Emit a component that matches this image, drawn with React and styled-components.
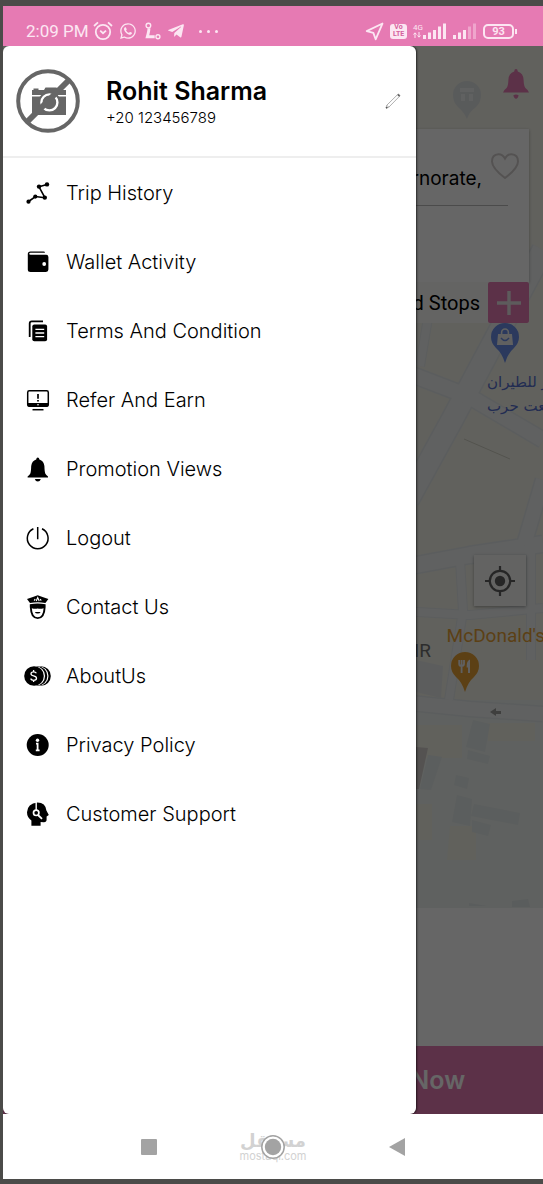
import React from 'react'
import styled, { createGlobalStyle } from 'styled-components'
import { FaWhatsapp, FaTelegramPlane } from 'react-icons/fa'

const GlobalStyle = createGlobalStyle`
*{
    box-sizing:border-box;
}
body{
    margin:0;
    background-color:#4b4b49;
    font-family:Inter, "Noto Sans", sans-serif;
}
`

const TripIcon = () => (
    <svg viewBox="0 0 28 28">
        <path d="M5.5 22.5 12.5 17.5 22 18.8 16 7.8 24 5.5" fill="none" stroke="#000" strokeWidth="1.6" />
        <circle cx="5.5" cy="22.7" r="2.1" />
        <circle cx="12.3" cy="17.6" r="2.1" />
        <circle cx="21.8" cy="18.6" r="2.2" />
        <circle cx="16" cy="7.6" r="2.2" />
        <circle cx="24" cy="5.4" r="2.2" />
    </svg>
)

const WalletIcon = () => (
    <svg viewBox="0 0 28 28">
        <path d="M7.5 3.5H20.5Q22 3.5 22 4.8H7.5Q6.2 4.9 6.2 5.8T7.5 6.8H23Q25.4 6.8 25.4 9V21.6Q25.4 24 23 24H7.5Q4.8 24 4.8 21.5V6Q4.8 3.5 7.5 3.5Z" />
        <circle cx="21.2" cy="16" r="1.9" fill="#fff" />
    </svg>
)

const TermsIcon = () => (
    <svg viewBox="0 0 28 28">
        <path d="M6.7 20V6.5Q6.7 4.4 8.8 4.4H20" fill="none" stroke="#000" strokeWidth="1.8" />
        <rect x="9.3" y="7.6" width="14.8" height="16.6" rx="2" />
        <path d="M12.4 12.4H21.2M12.4 16H21.2M12.4 19.6H21.2" stroke="#fff" strokeWidth="1.4" />
    </svg>
)

const ReferIcon = () => (
    <svg viewBox="0 0 28 28">
        <rect x="4.7" y="4.8" width="20.6" height="15.4" rx="1.6" fill="none" stroke="#000" strokeWidth="1.5" />
        <path d="M4.5 17H25.5V19.5Q25.5 20.8 24 20.8H6Q4.5 20.8 4.5 19.5Z" />
        <path d="M15 8V12.8M15 14V15.6" stroke="#000" strokeWidth="1.7" />
        <circle cx="15" cy="18.8" r="0.8" fill="#fff" />
        <path d="M9.5 23.7H20.5" stroke="#000" strokeWidth="1.5" />
    </svg>
)

const BellIcon = () => (
    <svg viewBox="0 0 28 28">
        <path d="M14.8 2.6Q16.2 2.6 16.4 4.4Q20.8 5.8 21.4 11Q21.6 17.6 22.4 18.8Q23 20 25 21.4V22.4H4.6V21.4Q6.6 20 7.2 18.8Q8 17.6 8.2 11Q8.8 5.8 13.2 4.4Q13.4 2.6 14.8 2.6Z" />
        <path d="M11.8 24H17.8Q17 26.6 14.8 26.6T11.8 24Z" />
    </svg>
)

const PowerIcon = () => (
    <svg viewBox="0 0 28 28" fill="none" stroke="#000" strokeWidth="1.5">
        <path d="M10.4 4.8A10.4 10.4 0 1 0 19 4.8M14.7 3V15.2" />
    </svg>
)

const OfficerIcon = () => (
    <svg viewBox="0 0 28 28">
        <path d="M14.7 2.2Q19 4 25.4 6L22.4 10Q14.7 8.4 7 10L4 6Q10.4 4 14.7 2.2Z" />
        <path d="M6.8 11.2Q14.7 9.6 22.6 11.2V14Q22.2 26 14.7 26T6.8 14Z" />
        <path d="M8.8 15.2Q12 16.2 14.7 15.4Q17.4 16.2 20.6 15.2Q20 24.2 14.7 24.2T8.8 15.2Z" fill="#fff" />
        <path d="M11.8 19H17.6Q17 20.6 14.7 20.6T11.8 19Z" />
        <path d="M13.2 8 14.7 4.6 16.2 8M11.2 7.6 12.2 6M18.2 7.6 17.2 6" fill="none" stroke="#fff" strokeWidth="1.1" />
    </svg>
)

const CoinsIcon = () => (
    <svg viewBox="0 0 28 28">
        <circle cx="18" cy="14" r="9.8" />
        <circle cx="15.7" cy="14" r="9.8" fill="#fff" />
        <circle cx="14.5" cy="14" r="9.8" />
        <circle cx="12.3" cy="14" r="9.8" fill="#fff" />
        <circle cx="11" cy="14" r="9.8" />
        <path d="M13.4 11.2Q12.6 9.8 10.6 9.8Q8 9.8 8 11.8Q8 13.4 10.6 13.9Q13.5 14.5 13.5 16.3Q13.5 18.3 10.7 18.3Q8.4 18.3 7.6 16.6M10.6 8V9.8M10.6 18.3V20" fill="none" stroke="#fff" strokeWidth="1.3" />
    </svg>
)

const InfoIcon = () => (
    <svg viewBox="0 0 28 28">
        <circle cx="14.7" cy="14" r="11" />
        <circle cx="14.5" cy="9.2" r="1.7" fill="#fff" />
        <path d="M13 12.7H14.6V19.4M12.8 19.4H16.6" stroke="#fff" strokeWidth="1.8" fill="none" />
    </svg>
)

const SupportIcon = () => (
    <svg viewBox="0 0 28 28">
        <path d="M14.4 2.4Q22.6 2.6 23.4 10.4L25.8 15 23.6 16.4V19.6Q23.6 22.4 20.6 22.2L17.6 22V25.8H8.4V20.4Q4 17.4 4 12.2Q4.4 3.4 14.4 2.4Z" />
        <path d="M13.2 2V10" stroke="#fff" strokeWidth="1.4" />
        <circle cx="13.2" cy="12.8" r="2.7" fill="none" stroke="#fff" strokeWidth="1.7" />
        <path d="M15 15 19 18.8" stroke="#fff" strokeWidth="1.8" />
    </svg>
)

const menuItems = [
    { label: 'Trip History', Icon: TripIcon },
    { label: 'Wallet Activity', Icon: WalletIcon },
    { label: 'Terms And Condition', Icon: TermsIcon },
    { label: 'Refer And Earn', Icon: ReferIcon },
    { label: 'Promotion Views', Icon: BellIcon },
    { label: 'Logout', Icon: PowerIcon },
    { label: 'Contact Us', Icon: OfficerIcon },
    { label: 'AboutUs', Icon: CoinsIcon },
    { label: 'Privacy Policy', Icon: InfoIcon },
    { label: 'Customer Support', Icon: SupportIcon },
]

const AvatarIcon = () => (
    <svg viewBox="0 0 64 64" width="64" height="64">
        <path d="M17.5 19.5H22.5V21H28L29.5 18.5H40.5L42 21H50V26H16V21H17.5ZM16 27.6H50V46H16Z" fill="#666" />
        <circle cx="33.4" cy="33.4" r="11" fill="#666" />
        <circle cx="33.4" cy="33.4" r="8" fill="none" stroke="#fff" strokeWidth="2.4" />
        <path d="M11 53 53 11" stroke="#666" strokeWidth="6" />
        <circle cx="32" cy="32" r="29.8" fill="none" stroke="#666" strokeWidth="4" />
    </svg>
)

const AlarmIcon = () => (
    <svg viewBox="0 0 20 20" width="20" height="20" fill="none" stroke="currentColor" strokeWidth="1.8">
        <circle cx="10" cy="11" r="7.2" />
        <path d="M1 5 5 1.4M19 5 15 1.4M7.2 9.6 10 12.2 13 9.6" />
    </svg>
)

const RouteIcon = () => (
    <svg viewBox="0 0 20 20" width="18" height="20" fill="none" stroke="currentColor">
        <circle cx="6" cy="4" r="2.6" strokeWidth="1.5" />
        <path d="M6.6 7Q6.6 10 4.8 16.4H13" strokeWidth="3.2" />
        <circle cx="16.6" cy="16.4" r="2.2" strokeWidth="1.5" />
    </svg>
)

const SignalIcon = ({ faded }) => (
    <svg viewBox="0 0 24 16" width="24" height="16" fill="currentColor">
        <rect x="0" y="12" width="3" height="4" />
        <rect x="5" y="9.5" width="3" height="6.5" />
        <rect x="10" y="7" width="3" height="9" />
        <rect x="15" y="3.5" width="3" height="12.5" opacity={faded ? 0.4 : 1} />
        <rect x="20" y="0.5" width="3" height="15.5" opacity={faded ? 0.4 : 1} />
    </svg>
)

// streets and blocks behind the booking card
const MapDrawing = () => (
    <MapSvg viewBox="3 46 540 862" preserveAspectRatio="xMaxYMin slice">
        <rect x="3" y="46" width="540" height="862" fill="#f2f2e9" />
        <rect x="3" y="700" width="540" height="208" fill="#edf3ef" />
        <g fill="none" stroke="#e4e9ea" strokeLinejoin="round">
            <path d="M543 250 500 330 452 420 408 500" strokeWidth="24" />
            <path d="M400 370 470 397 543 440" strokeWidth="18" />
            <path d="M428 318 420 366" strokeWidth="10" />
            <path d="M400 568 470 555 543 544" strokeWidth="19" />
            <path d="M543 480 524 545" strokeWidth="17" />
            <path d="M400 611 470 615 543 608M460 560 463 611 449 700M531 552V660" strokeWidth="10" />
            <path d="M400 702 470 709 543 714" strokeWidth="17" />
        </g>
        <g fill="none" stroke="#f0f2f2" strokeLinejoin="round">
            <path d="M543 250 500 330 452 420 408 500" strokeWidth="21" />
            <path d="M400 370 470 397 543 440" strokeWidth="15" />
            <path d="M428 318 420 366" strokeWidth="8" />
            <path d="M400 568 470 555 543 544" strokeWidth="16" />
            <path d="M543 480 524 545" strokeWidth="14" />
            <path d="M400 611 470 615 543 608M460 560 463 611 449 700M531 552V660" strokeWidth="8" />
            <path d="M400 702 470 709 543 714" strokeWidth="14" />
        </g>
        <path d="M464 439 510 459" stroke="#cfcfc2" />
        <path d="M416 660 443 666 441 698 416 692Z" fill="#e6e9e9" />
        <path d="M416 725H462V758H416ZM488 723H535V741H488ZM450 826H476V860H447ZM416 804H432V840H416Z" fill="#f2f2e6" />
        <path d="M416 747 428 748 419 789H416Z" fill="#d2cdca" />
        <path d="M428 755 442 757 431 790 420 789ZM473 720 490 724 485 752 466 747ZM468 750 490 756 488 764 467 759ZM456 775 469 778 467 789 454 785ZM457 795 472 799 470 826 452 822ZM474 804 520 813 518 825 471 816ZM472 820 491 825 488 836 472 832Z" fill="#e4eaea" />
        <path d="M469 903 487 906H469ZM512 901 528 899 530 907H512Z" fill="#e2e8e8" />
        <path d="M490 712 496 708 496 711H501V714H496V716Z" fill="#9d9d9b" />
        <g>
            <path d="M467 119Q464 112 458 107Q453 102 453 95A14 14 0 0 1 481 95Q481 102 476 107Q469 112 467 119Z" fill="#dfe3e3" />
            <path d="M460 88H474V92H460ZM461 94H465V101H461ZM469 94H473V101H469Z" fill="#f0f2f2" />
        </g>
    </MapSvg>
)

const ShopPin = () => (
    <svg viewBox="0 0 28 40" width="28" height="40">
        <path d="M14 40Q11 30 5 25Q0 20 0 14A14 14 0 0 1 28 14Q28 20 23 25Q17 30 14 40Z" fill="#6b8fe8" />
        <path d="M7 11H21L22 22H6Z" fill="#f0f0f0" />
        <path d="M10.6 11V9.4A3.4 3.4 0 0 1 17.4 9.4V11" fill="none" stroke="#f0f0f0" strokeWidth="1.6" />
        <path d="M10 15Q14 20 18 15" fill="none" stroke="#6b8fe8" strokeWidth="1.4" />
    </svg>
)

const FoodPin = () => (
    <svg viewBox="0 0 28 40" width="28" height="40">
        <path d="M14 40Q11 30 5 25Q0 20 0 14A14 14 0 0 1 28 14Q28 20 23 25Q17 30 14 40Z" fill="#e6a136" />
        <path d="M8.2 8V12Q8.2 14 10.6 14T13 12V8M10.6 8V21" fill="none" stroke="#f0f0f0" strokeWidth="1.8" />
        <path d="M19 7.6V21H17V15.6H15.6Q15.4 8.6 19 7.6Z" fill="#f0f0f0" />
    </svg>
)

function StatusBar() {
    return (
        <Status>
            <StatusGroup>
                <Clock>2:09 PM</Clock>
                <AlarmIcon />
                <FaWhatsapp size={18} />
                <RouteIcon />
                <FaTelegramPlane size={18} />
                <Dots>
                    <i /><i /><i />
                </Dots>
            </StatusGroup>
            <StatusGroup>
                <svg viewBox="0 0 20 20" width="19" height="19" fill="none" stroke="currentColor" strokeWidth="1.9" strokeLinejoin="round">
                    <path d="M18.4 1.6 1.8 9.6 8.8 11.4 11.2 18.2Z" />
                </svg>
                <Volte>
                    <span>Vo</span>
                    <span>LTE</span>
                </Volte>
                <Network>
                    <small>4G</small>
                    <svg viewBox="0 0 8 6" width="8" height="6" fill="none" stroke="currentColor">
                        <path d="M2 6V1M0.5 2.5 2 0.8 3.5 2.5M6 0V5M4.5 3.5 6 5.2 7.5 3.5" />
                    </svg>
                </Network>
                <SignalIcon />
                <SignalIcon faded />
                <Battery>93</Battery>
            </StatusGroup>
        </Status>
    )
}

function BookingScreen() {
    return (
        <Screen>
            <MapArea>
                <MapDrawing />
                <TopBar>
                    <IconButton aria-label="Notifications">
                        <svg viewBox="0 0 26 30" width="26" height="30" fill="#e67ab3">
                            <path d="M13 0Q14.6 0 14.8 2.4Q20.4 4 20.6 11Q20.8 17 22.4 19Q25.6 21.4 26 23.6H0Q.4 21.4 3.6 19Q5.2 17 5.4 11Q5.6 4 11.2 2.4Q11.4 0 13 0Z" />
                            <path d="M10.4 26.2Q13 25 15.6 26.2Q15 29.6 13 29.8Q11 29.6 10.4 26.2Z" />
                        </svg>
                    </IconButton>
                </TopBar>
                <PlaceCard>
                    <PlaceRow>
                        <Place>Cairo Governorate,</Place>
                        <IconButton aria-label="Save place">
                            <svg viewBox="0 0 28 26" width="28" height="26" fill="none" stroke="#d2cecc" strokeWidth="2">
                                <path d="M14 25Q1 15 1 8.4Q1 1.6 7.4 1.2Q11.6 1 14 5.6Q16.4 1 20.6 1.2Q27 1.6 27 8.4Q27 15 14 25Z" />
                            </svg>
                        </IconButton>
                    </PlaceRow>
                    <Rule />
                </PlaceCard>
                <StopsRow>
                    <span>Add Stops</span>
                    <PlusButton aria-label="Add stop">
                        <svg viewBox="0 0 24 24" width="24" height="24" stroke="#e9e4e6" strokeWidth="3.4">
                            <path d="M12 0V24M0 12H24" />
                        </svg>
                    </PlusButton>
                </StopsRow>
                <Marker $right={24} $top={277}><ShopPin /></Marker>
                <Marker $right={-44} $top={324}>
                    <ArabicLabel lang="ar" dir="rtl">
                        <span>مصر للطيران</span>
                        <span>طلعت حرب</span>
                    </ArabicLabel>
                </Marker>
                <Marker $right={17} $top={509}>
                    <LocateButton aria-label="My location">
                        <svg viewBox="0 0 30 30" width="30" height="30" fill="none" stroke="#606060" strokeWidth="2.2">
                            <circle cx="15" cy="15" r="10.2" />
                            <circle cx="15" cy="15" r="5.2" fill="#606060" stroke="none" />
                            <path d="M15 0V5M15 25V30M0 15H5M25 15H30" />
                        </svg>
                    </LocateButton>
                </Marker>
                <Marker $right={-2} $top={578}><PoiLabel $color="#e6a136">McDonald's</PoiLabel></Marker>
                <Marker $right={112} $top={593}><PoiLabel $color="#707070">TAHRIR</PoiLabel></Marker>
                <Marker $right={64} $top={606}><FoodPin /></Marker>
            </MapArea>
            <Panel />
            <RideBar>
                <RideButton>Ride Later</RideButton>
                <RideButton>Ride Now</RideButton>
            </RideBar>
        </Screen>
    )
}

function SideMenu() {
    return (
        <Drawer>
            <Profile>
                <AvatarIcon />
                <Who>
                    <Name>Rohit Sharma</Name>
                    <Phone>+20 123456789</Phone>
                </Who>
                <IconButton aria-label="Edit profile">
                    <svg viewBox="0 0 16 16" width="16" height="16" fill="none" stroke="#9a9a9a" strokeWidth="0.8">
                        <path d="M1 15 1.8 12.2 12.8 1.4Q13.6 .8 14.4 1.6Q15.2 2.4 14.6 3.2L3.8 14.2ZM1.8 12.2 3.8 14.2" />
                        <path d="M12.8 1.4 14.6 3.2M1 15 2.4 14.4" stroke="#555" strokeWidth="1.4" />
                    </svg>
                </IconButton>
            </Profile>
            <Menu>
                {menuItems.map(({ label, Icon }) => (
                    <MenuItem href="#" key={label}>
                        <Icon />
                        {label}
                    </MenuItem>
                ))}
            </Menu>
        </Drawer>
    )
}

export default function App() {
    return (
        <>
            <GlobalStyle />
            <Shell>
                <StatusBar />
                <Stage>
                    <BookingScreen />
                    <Scrim />
                    <SideMenu />
                </Stage>
                <NavBar>
                    <NavButton aria-label="Recent apps">
                        <svg viewBox="0 0 16 16" width="16" height="16"><rect width="16" height="16" rx="1" fill="#a3a3a3" /></svg>
                    </NavButton>
                    <Home>
                        <Watermark>
                            <b lang="ar" dir="rtl">مستقل</b>
                            <span>mostaql.com</span>
                        </Watermark>
                        <NavButton aria-label="Home">
                            <svg viewBox="0 0 24 24" width="24" height="24">
                                <circle cx="12" cy="12" r="11.2" fill="#fff" stroke="#a3a3a3" strokeWidth="1.5" />
                                <circle cx="12" cy="12" r="8.2" fill="#a3a3a3" />
                            </svg>
                        </NavButton>
                    </Home>
                    <NavButton aria-label="Back">
                        <svg viewBox="0 0 16 18" width="16" height="18"><path d="M16 0V18L0 9Z" fill="#a3a3a3" /></svg>
                    </NavButton>
                </NavBar>
            </Shell>
        </>
    )
}

const Shell = styled.div`
display:flex;
flex-direction:column;
min-height:100vh;
padding:6px 0 5px 3px;
`;

const Status = styled.header`
display:flex;
justify-content:space-between;
align-items:center;
height:40px;
padding:10px 29px 0 23px;
background-color:#e67ab3;
color:#fce6f2;
`;

const StatusGroup = styled.div`
display:flex;
align-items:center;
gap:6px;
`;

const Clock = styled.span`
margin-right:-2px;
font:400 17px/20px Roboto, sans-serif;
`;

const Dots = styled.span`
display:flex;
gap:5px;
padding-left:8px;
i{
    width:3px;
    height:3px;
    border-radius:50%;
    background-color:currentColor;
}
`;

const Volte = styled.span`
display:flex;
flex-direction:column;
align-items:center;
width:17px;
height:15px;
border-radius:3px;
background-color:#fce6f2;
color:#d4609c;
font:700 7px/7px Roboto, sans-serif;
`;

const Network = styled.span`
display:flex;
flex-direction:column;
align-items:flex-start;
margin-right:-6px;
small{
    font:400 8px/8px Roboto, sans-serif;
}
`;

const Battery = styled.span`
position:relative;
width:31px;
height:15px;
border:2px solid #fce6f2;
border-radius:5px;
text-align:center;
font:700 11px/11px Roboto, sans-serif;
&::after{
    content:"";
    position:absolute;
    right:-5px;
    top:3px;
    width:2px;
    height:5px;
    background-color:#fce6f2;
}
`;

const Stage = styled.main`
display:grid;
flex:1;
overflow:hidden;
> *{
    grid-area:1 / 1;
}
`;

const Screen = styled.section`
display:flex;
flex-direction:column;
min-width:0;
background-color:#fff;
`;

const MapArea = styled.div`
position:relative;
flex:1;
overflow:hidden;
padding:0 14px;
`;

const MapSvg = styled.svg`
position:absolute;
inset:0;
width:100%;
height:100%;
`;

const TopBar = styled.div`
position:relative;
display:flex;
justify-content:flex-end;
height:83px;
padding-top:23px;
`;

const IconButton = styled.button`
display:flex;
flex-shrink:0;
align-self:flex-start;
padding:0;
border:0;
background:none;
cursor:pointer;
`;

const PlaceCard = styled.div`
position:relative;
height:153px;
padding:24px 10px;
background-color:#fff;
box-shadow:0 1px 3px rgba(0,0,0,0.3);
`;

const PlaceRow = styled.div`
display:flex;
justify-content:flex-end;
gap:9px;
`;

const Place = styled.span`
padding-top:12px;
font-size:19px;
line-height:28px;
`;

const Rule = styled.hr`
height:1px;
margin:12px 11px 0 0;
border:0;
background-color:#bbb;
`;

const StopsRow = styled.div`
position:relative;
display:flex;
justify-content:flex-end;
align-items:center;
gap:8px;
height:41px;
margin-left:50%;
background-color:#fbfbf8;
font:400 20px/24px Roboto, sans-serif;
`;

const PlusButton = styled.button`
display:flex;
align-items:center;
justify-content:center;
width:41px;
height:41px;
padding:0;
border:0;
border-radius:2px;
background-color:#e67ab3;
`;

const Marker = styled.div`
position:absolute;
right:${({ $right }) => $right}px;
top:${({ $top }) => $top}px;
`;

const ArabicLabel = styled.div`
display:flex;
flex-direction:column;
align-items:flex-end;
width:100px;
color:#566fce;
font:400 15px/24px "DejaVu Sans", sans-serif;
white-space:nowrap;
`;

const LocateButton = styled.button`
display:flex;
align-items:center;
justify-content:center;
width:52px;
height:51px;
padding:0;
border:0;
background-color:#f7f7f4;
box-shadow:0 1px 3px rgba(0,0,0,0.35);
`;

const PoiLabel = styled.span`
color:${({ $color }) => $color};
font:400 19px/24px Roboto, sans-serif;
`;

const Panel = styled.div`
height:138px;
`;

const RideBar = styled.div`
display:grid;
grid-template-columns:1fr 1fr;
height:68px;
`;

const RideButton = styled.button`
border:0;
background-color:#e67ab3;
color:#fff;
font:600 25px/30px Inter, sans-serif;
`;

const Scrim = styled.div`
z-index:1;
background-color:rgba(0,0,0,0.6);
`;

const Drawer = styled.aside`
z-index:2;
width:76.5%;
border-radius:6px;
background-color:#fff;
box-shadow:1px 0 2px rgba(0,0,0,0.6);
`;

const Profile = styled.div`
display:flex;
align-items:center;
height:112px;
padding:0 15px 0 13px;
border-bottom:2px solid #eee;
> button{
    align-self:center;
}
`;

const Who = styled.div`
display:flex;
flex:1;
flex-direction:column;
padding:3px 0 0 26px;
`;

const Name = styled.strong`
font-size:25px;
font-weight:600;
line-height:30px;
`;

const Phone = styled.span`
font-size:15px;
font-weight:300;
line-height:24px;
`;

const Menu = styled.nav`
display:flex;
flex-direction:column;
`;

const MenuItem = styled.a`
display:flex;
align-items:center;
gap:15px;
height:69px;
padding-left:20px;
color:#000;
font-size:20px;
font-weight:300;
text-decoration:none;
svg{
    width:28px;
    height:28px;
    flex-shrink:0;
}
`;

const NavBar = styled.footer`
display:flex;
align-items:center;
justify-content:center;
gap:104px;
height:65px;
background-color:#fff;
`;

const NavButton = styled.button`
display:flex;
padding:0;
border:0;
background:none;
`;

const Home = styled.div`
position:relative;
`;

/* sits centred behind the home button */
const Watermark = styled.div`
position:absolute;
left:50%;
top:50%;
display:flex;
flex-direction:column;
align-items:center;
transform:translate(-50%,-50%);
color:#d2d2d2;
b{
    font:700 18px/18px "DejaVu Sans", sans-serif;
}
span{
    font:400 11px/12px Inter, sans-serif;
}
& + button{
    position:relative;
}
`;
